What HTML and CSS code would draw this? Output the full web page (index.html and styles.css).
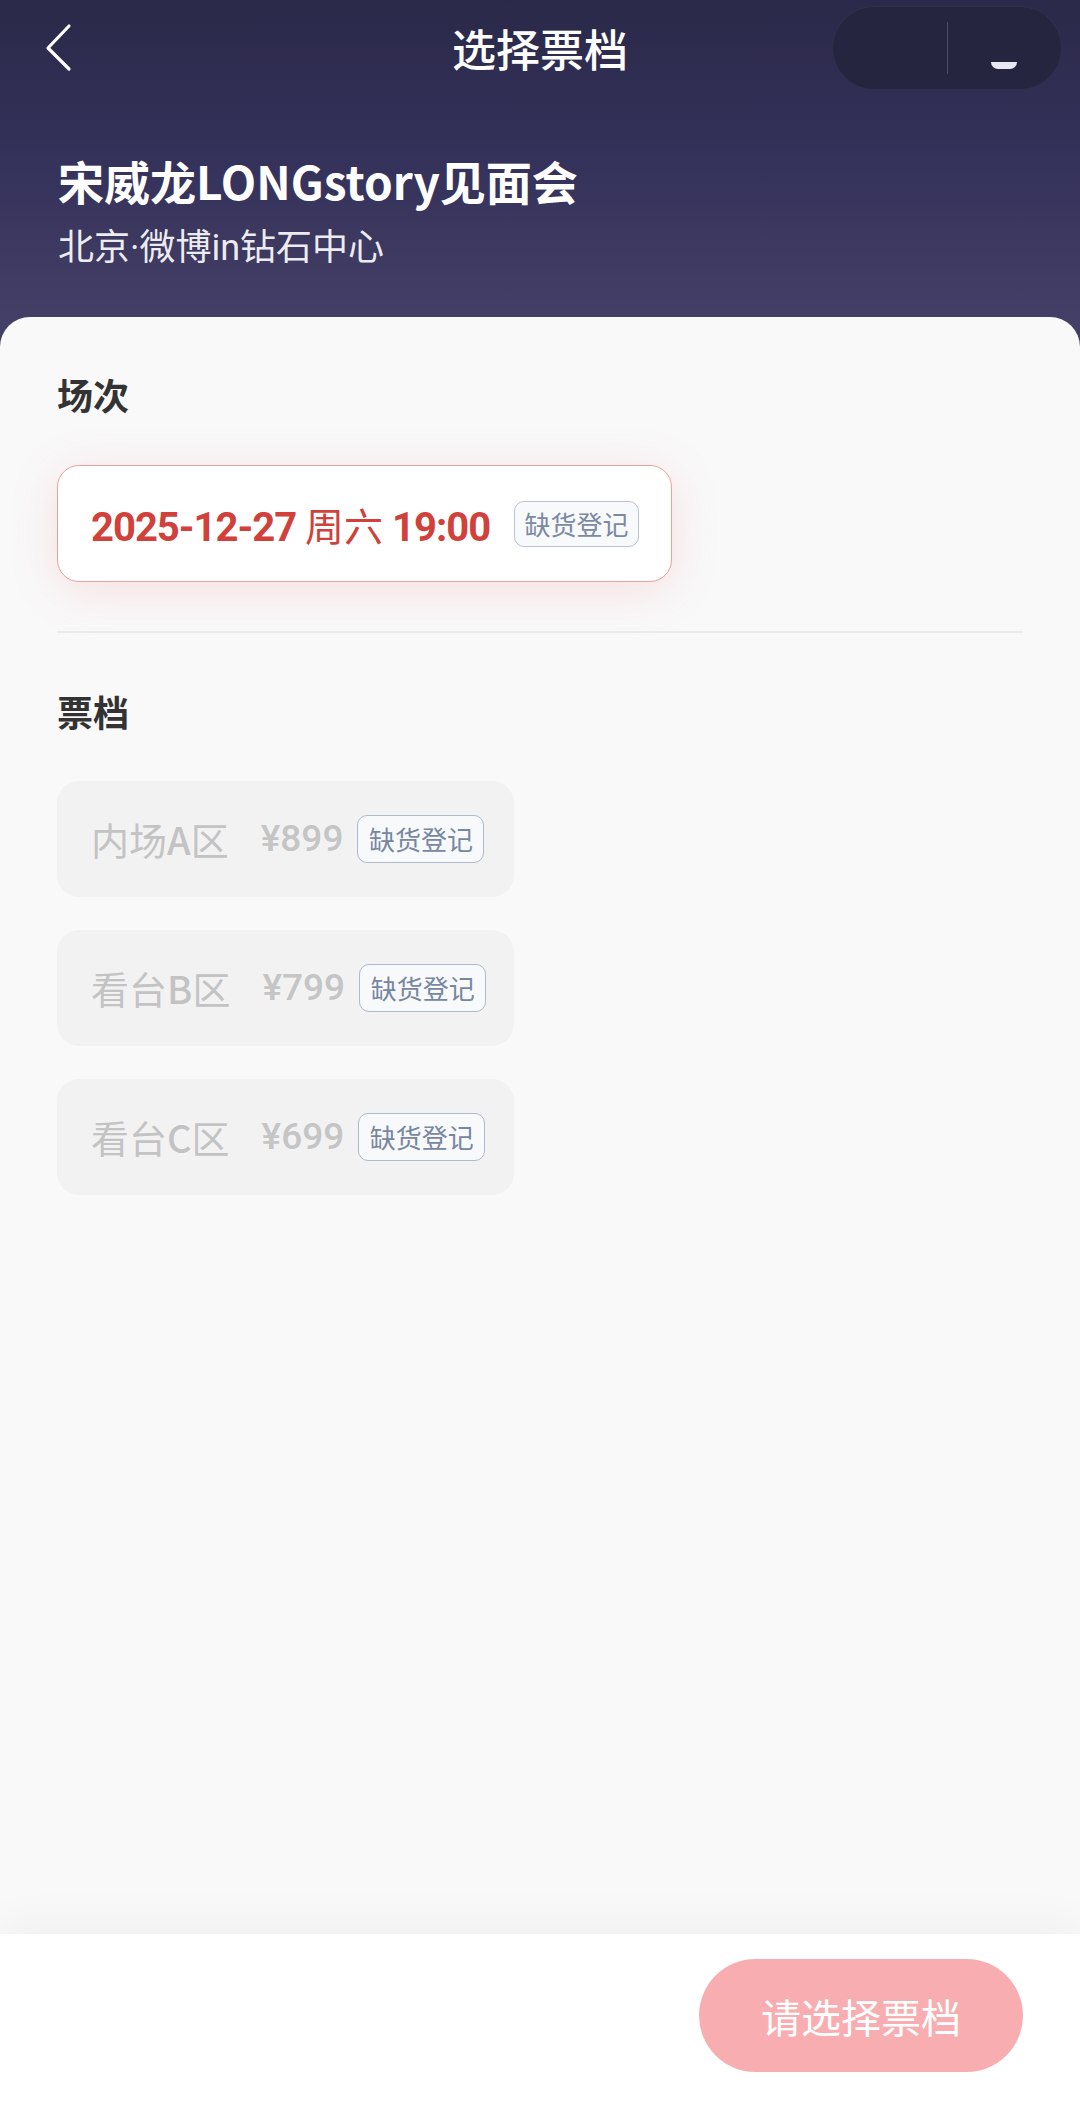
FILE: index.html
```html
<!DOCTYPE html>
<html lang="zh-CN">
<head>
    <meta charset="UTF-8">
    <meta name="viewport" content="width=device-width, initial-scale=1.0">
    <title>选择票档</title>
    <link rel="stylesheet" href="styles.css">
</head>
<body>

<div class="page">
    <header class="top">
        <div class="nav">
            <a class="back" href="#">
                <svg width="30" height="50" viewBox="0 0 30 50">
                    <path d="M25 3 L4 25 L25 46" fill="none" stroke="#fff" stroke-width="3.2" stroke-linecap="round" stroke-linejoin="round"/>
                </svg>
            </a>
            <h2 class="nav-title">选择票档</h2>
            <div class="capsule">
                <span class="capsule-left"></span>
                <span class="capsule-line"></span>
                <span class="capsule-right"><i class="capsule-dot"></i></span>
            </div>
        </div>
        <div class="event">
            <h1 class="event-name">宋威龙LONGstory见面会</h1>
            <p class="event-place">北京·微博in钻石中心</p>
        </div>
    </header>

    <main class="sheet">
        <h3 class="section-title">场次</h3>
        <div class="session-card">
            <span class="session-date">2025-12-27 <span class="cjk">周六</span> 19:00</span>
            <span class="tag">缺货登记</span>
        </div>

        <div class="divider"></div>

        <h3 class="section-title">票档</h3>
        <div class="tier-list">
            <div class="tier-card">
                <span class="tier-name">内场<b>A</b>区</span>
                <span class="tier-price">¥899</span>
                <span class="tag tag-tier">缺货登记</span>
            </div>
            <div class="tier-card">
                <span class="tier-name">看台<b>B</b>区</span>
                <span class="tier-price">¥799</span>
                <span class="tag tag-tier">缺货登记</span>
            </div>
            <div class="tier-card">
                <span class="tier-name">看台<b>C</b>区</span>
                <span class="tier-price">¥699</span>
                <span class="tag tag-tier">缺货登记</span>
            </div>
        </div>
    </main>

    <footer class="bottom-bar">
        <button class="btn-select">请选择票档</button>
    </footer>
</div>

</body>
</html>
```

FILE: styles.css
```css
body {
    margin: 0;
    padding: 0;
    font-family: Roboto, "Noto Sans CJK SC", sans-serif;
    background-color: #f9f9fa;
}
.page {
    display: flex;
    flex-direction: column;
    height: 2113px;
}
.top {
    height: 347px;
    flex-shrink: 0;
    box-sizing: border-box;
    background: linear-gradient(180deg, #2b2949 0%, #34315a 45%, #443f66 92%);
    color: #fff;
}
.nav {
    display: grid;
    grid-template-columns: 1fr auto 1fr;
    align-items: center;
    height: 96px;
    padding: 0 18px;
}
.back {
    display: flex;
    margin-left: 26px;
}
.nav-title {
    margin: 0;
    font-family: "Noto Sans CJK SC", sans-serif;
    font-size: 44px;
    font-weight: 500;
    line-height: 1;
}
.capsule {
    justify-self: end;
    display: flex;
    align-items: center;
    width: 230px;
    height: 84px;
    box-sizing: border-box;
    border-radius: 42px;
    background-color: #26253f;
    border: 1px solid rgba(255, 255, 255, 0.05);
}
.capsule-left {
    flex: 1;
}
.capsule-line {
    width: 1px;
    height: 52px;
    background-color: rgba(255, 255, 255, 0.18);
}
.capsule-right {
    flex: 1;
    display: flex;
    justify-content: center;
    padding-top: 34px;
}
.capsule-dot {
    display: block;
    width: 26px;
    height: 7px;
    border-radius: 0 0 13px 13px;
    background-color: #e8e8f0;
    filter: blur(0.6px);
}
.event {
    padding: 55px 58px 0;
}
.event-name {
    margin: 0;
    font-family: "Noto Sans CJK SC", sans-serif;
    font-size: 46px;
    font-weight: 700;
    line-height: 58px;
}
.event-place {
    margin: 15px 0 0;
    font-family: Roboto, "Noto Sans CJK SC", sans-serif;
    font-size: 36px;
    font-weight: 400;
    line-height: 48px;
    color: rgba(255, 255, 255, 0.92);
}
.sheet {
    flex: 1;
    margin-top: -30px;
    padding: 52px 57px 0;
    background-color: #f9f9fa;
    border-radius: 30px 30px 0 0;
}
.section-title {
    margin: 0;
    font-family: "Noto Sans CJK SC", sans-serif;
    font-size: 36px;
    font-weight: 700;
    line-height: 50px;
    color: #333;
}
.session-card {
    display: flex;
    align-items: center;
    gap: 24px;
    width: 615px;
    height: 117px;
    box-sizing: border-box;
    margin-top: 46px;
    padding: 0 30px 0 33px;
    background-color: #fff;
    border: 1.5px solid #eba29c;
    border-radius: 22px;
    box-shadow: 0 8px 48px rgba(236, 96, 86, 0.17);
}
.session-date {
    font-size: 40px;
    font-weight: 700;
    letter-spacing: -1px;
    color: #d0413b;
    white-space: nowrap;
}
.session-date .cjk {
    font-family: "Noto Sans CJK SC", sans-serif;
    font-size: 39px;
    font-weight: 400;
    letter-spacing: 0;
}
.tag {
    display: flex;
    align-items: center;
    justify-content: center;
    width: 125px;
    height: 46px;
    box-sizing: border-box;
    border: 1.5px solid #b9c3d1;
    border-radius: 10px;
    background-color: #f8f9fb;
    font-family: "Noto Sans CJK SC", sans-serif;
    font-size: 26px;
    color: #7b8aa1;
    flex-shrink: 0;
}
.divider {
    height: 1.5px;
    margin-top: 49px;
    background-color: #ebebec;
}
.divider + .section-title {
    margin-top: 53px;
}
.tier-list {
    display: flex;
    flex-direction: column;
    gap: 33px;
    margin-top: 45px;
}
.tier-card {
    display: flex;
    align-items: center;
    width: 457px;
    height: 116px;
    box-sizing: border-box;
    padding-left: 34px;
    background-color: #f2f2f3;
    border-radius: 22px;
}
.tier-name {
    font-family: "Noto Sans CJK SC", sans-serif;
    font-size: 38px;
    font-weight: 400;
    color: #c3c3c3;
}
.tier-name b {
    font-weight: 500;
}
.tier-price {
    margin-left: 32px;
    font-size: 37px;
    font-weight: 500;
    color: #c5c5c5;
}
.tag-tier {
    width: 127px;
    height: 48px;
    margin-left: 14px;
    border-color: #aeb9ca;
    color: #7787a1;
}
.bottom-bar {
    display: flex;
    justify-content: flex-end;
    height: 179px;
    flex-shrink: 0;
    box-sizing: border-box;
    padding: 25px 57px 0;
    background-color: #fff;
    box-shadow: 0 -14px 40px rgba(0, 0, 0, 0.035);
}
.btn-select {
    width: 324px;
    height: 113px;
    border: none;
    border-radius: 57px;
    background-color: #f8aeb0;
    color: #fff;
    font-family: "Noto Sans CJK SC", sans-serif;
    font-size: 40px;
    cursor: pointer;
}
```
